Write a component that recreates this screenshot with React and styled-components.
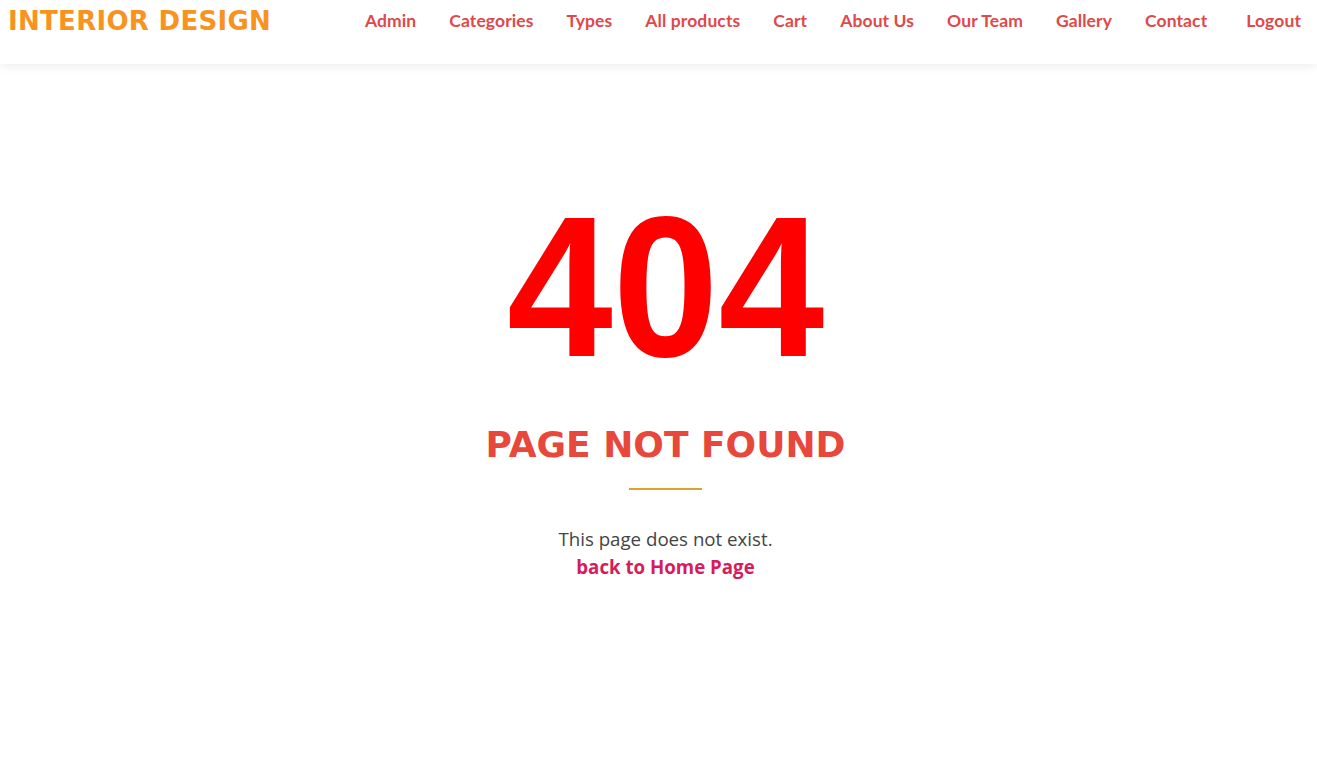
import styled, { createGlobalStyle } from "styled-components";

const GlobalStyle = createGlobalStyle`
  body {
    margin: 0;
    background: #fff;
    font-family: "Open Sans", sans-serif;
  }
`;

const links = [
  "Admin",
  "Categories",
  "Types",
  "All products",
  "Cart",
  "About Us",
  "Our Team",
  "Gallery",
  "Contact",
];

function App() {
  return (
    <>
      <GlobalStyle />
      <Header>
        <Logo>INTERIOR DESIGN</Logo>
        <Nav>
          {links.map((l) => (
            <NavLink key={l} href="#">
              {l}
            </NavLink>
          ))}
          <NavLink href="#" $extra>
            Logout
          </NavLink>
        </Nav>
      </Header>
      <Main>
        <Code>404</Code>
        <Title>PAGE NOT FOUND</Title>
        <Divider />
        <Message>This page does not exist.</Message>
        <HomeLink href="#">back to Home Page</HomeLink>
      </Main>
    </>
  );
}

export default App;

const Header = styled.header`
  height: 64px;
  display: flex;
  align-items: flex-start;
  justify-content: space-between;
  padding: 0 16px 0 8px;
  box-shadow: 0 2px 10px rgba(0, 0, 0, 0.08);
`;

const Logo = styled.h1`
  margin: 6px 0 0;
  font-family: "DejaVu Sans", sans-serif;
  font-weight: 700;
  font-size: 26px;
  letter-spacing: 0.3px;
  color: #f7931e;
`;

const Nav = styled.nav`
  display: flex;
  gap: 33px;
  margin-top: 10px;
`;

const NavLink = styled.a`
  font-family: "Lato", sans-serif;
  font-weight: 700;
  font-size: 17.5px;
  letter-spacing: 0.1px;
  color: #e0484a;
  text-decoration: none;
  margin-left: ${(p) => (p.$extra ? "6px" : "0")};
`;

const Main = styled.main`
  display: flex;
  flex-direction: column;
  align-items: center;
  padding: 122px 0 0 14px;
`;

const Code = styled.div`
  font-family: "Liberation Sans", Arial, sans-serif;
  font-weight: 700;
  font-size: 201px;
  line-height: 1;
  color: #ff0000;
  transform: scaleX(0.946);
`;

const Title = styled.h2`
  margin: 40px 0 0;
  font-family: "DejaVu Sans", sans-serif;
  font-weight: 700;
  font-size: 36px;
  line-height: 1;
  color: #e8473b;
`;

const Divider = styled.div`
  width: 73px;
  height: 2px;
  background: #e0a030;
  margin-top: 25px;
`;

const Message = styled.p`
  margin: 36px 0 0;
  font-size: 18.7px;
  color: #444;
`;

const HomeLink = styled.a`
  margin-top: 3px;
  font-size: 18.7px;
  font-weight: 700;
  color: #d81b5a;
  text-decoration: none;
`;
